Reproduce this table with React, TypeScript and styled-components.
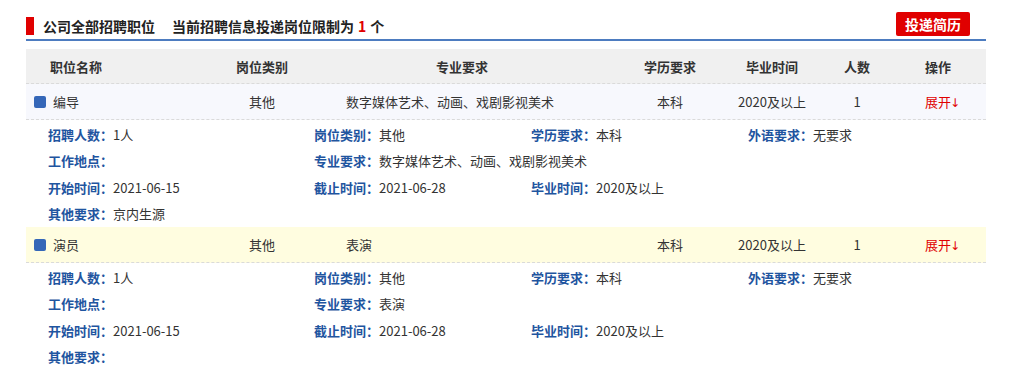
import styled, { createGlobalStyle } from "styled-components";

const GlobalStyle = createGlobalStyle`
  body {
    margin: 0;
    background: #fff;
    font-family: "Noto Sans CJK SC", "Liberation Sans", sans-serif;
    font-size: 13px;
    color: #333;
  }
`;

const Wrap = styled.div`
  width: 960px;
  margin-left: 26px;
  padding-top: 12px;
`;

const TitleBar = styled.div`
  display: flex;
  align-items: center;
  justify-content: space-between;
  height: 27px;
  border-bottom: 2px solid #4d7cc0;
`;

const Title = styled.h2`
  margin: 0;
  display: flex;
  align-items: center;
  font-size: 14px;
  font-weight: bold;
  color: #222;
  line-height: 18px;
  &::before {
    content: "";
    width: 8px;
    height: 18px;
    background: #e00000;
    margin-right: 9px;
  }
`;

const Limit = styled.span`
  margin-left: 17px;
`;

const Num = styled.em`
  font-style: normal;
  color: #e00000;
  margin: 0 4px;
`;

const SendButton = styled.button`
  margin-right: 16px;
  margin-bottom: 3px;
  height: 24px;
  padding: 0 9px;
  border: none;
  border-radius: 2px;
  background: #e00000;
  color: #fff;
  font-family: inherit;
  font-size: 14px;
  font-weight: bold;
  cursor: pointer;
`;

const Table = styled.div`
  margin-top: 8px;
`;

const cols = "186px 100px 300px 116px 88px 82px 80px 1fr";

const HeadRow = styled.div`
  display: grid;
  grid-template-columns: ${cols};
  height: 34px;
  align-items: center;
  background: #f0f0f0;
  border-bottom: 1px dashed #dadada;
  font-weight: bold;
  color: #333;
`;

const Row = styled.div<{ $bg: string }>`
  display: grid;
  grid-template-columns: ${cols};
  height: 35px;
  align-items: center;
  background: ${(p) => p.$bg};
  border-bottom: 1px dashed #dadada;
`;

const Cell = styled.div<{ $left?: number }>`
  text-align: ${(p) => (p.$left !== undefined ? "left" : "center")};
  padding-left: ${(p) => p.$left ?? 0}px;
  white-space: nowrap;
`;

const NameCell = styled.div`
  display: flex;
  align-items: center;
  gap: 7px;
  padding-left: 8px;
`;

const Square = styled.span`
  width: 12px;
  height: 12px;
  border-radius: 2px;
  background: #3567b8;
`;

const Toggle = styled.a`
  color: #e00000;
  text-decoration: none;
  cursor: pointer;
  padding-left: 9px;
`;

const Arrow = styled.span`
  font-family: "DejaVu Sans", sans-serif;
  font-size: 12px;
  margin-left: -1px;
`;

const Details = styled.div`
  display: grid;
  grid-template-columns: 266px 217px 217px 1fr;
  padding: 2px 0 0 22px;
  line-height: 26.25px;
`;

const Item = styled.div<{ $span?: number }>`
  grid-column: span ${(p) => p.$span ?? 1};
  white-space: nowrap;
`;

const Label = styled.b`
  color: #1f55a0;
  font-weight: bold;
`;

type Job = {
  name: string;
  type: string;
  major: string;
  edu: string;
  grad: string;
  count: string;
  start: string;
  end: string;
  other: string;
  bg: string;
};

const jobs: Job[] = [
  {
    name: "编导",
    type: "其他",
    major: "数字媒体艺术、动画、戏剧影视美术",
    edu: "本科",
    grad: "2020及以上",
    count: "1",
    start: "2021-06-15",
    end: "2021-06-28",
    other: "京内生源",
    bg: "#f7f8fd",
  },
  {
    name: "演员",
    type: "其他",
    major: "表演",
    edu: "本科",
    grad: "2020及以上",
    count: "1",
    start: "2021-06-15",
    end: "2021-06-28",
    other: "",
    bg: "#fffde0",
  },
];

function JobBlock({ job }: { job: Job }) {
  return (
    <>
      <Row $bg={job.bg}>
        <NameCell>
          <Square />
          {job.name}
        </NameCell>
        <Cell>{job.type}</Cell>
        <Cell $left={34}>{job.major}</Cell>
        <Cell>{job.edu}</Cell>
        <Cell>{job.grad}</Cell>
        <Cell>{job.count}</Cell>
        <Cell>
          <Toggle>
            展开<Arrow>↓</Arrow>
          </Toggle>
        </Cell>
      </Row>
      <Details>
        <Item><Label>招聘人数：</Label>{job.count}人</Item>
        <Item><Label>岗位类别：</Label>{job.type}</Item>
        <Item><Label>学历要求：</Label>{job.edu}</Item>
        <Item><Label>外语要求：</Label>无要求</Item>

        <Item><Label>工作地点：</Label></Item>
        <Item $span={3}><Label>专业要求：</Label>{job.major}</Item>

        <Item><Label>开始时间：</Label>{job.start}</Item>
        <Item><Label>截止时间：</Label>{job.end}</Item>
        <Item $span={2}><Label>毕业时间：</Label>{job.grad}</Item>

        <Item $span={4}><Label>其他要求：</Label>{job.other}</Item>
      </Details>
    </>
  );
}

export default function App() {
  return (
    <>
      <GlobalStyle />
      <Wrap>
        <TitleBar>
          <Title>
            公司全部招聘职位
            <Limit>
              当前招聘信息投递岗位限制为<Num>1</Num>个
            </Limit>
          </Title>
          <SendButton>投递简历</SendButton>
        </TitleBar>
        <Table>
          <HeadRow>
            <Cell $left={24}>职位名称</Cell>
            <Cell>岗位类别</Cell>
            <Cell>专业要求</Cell>
            <Cell>学历要求</Cell>
            <Cell>毕业时间</Cell>
            <Cell>人数</Cell>
            <Cell>操作</Cell>
          </HeadRow>
          {jobs.map((j) => (
            <JobBlock key={j.name} job={j} />
          ))}
        </Table>
      </Wrap>
    </>
  );
}
